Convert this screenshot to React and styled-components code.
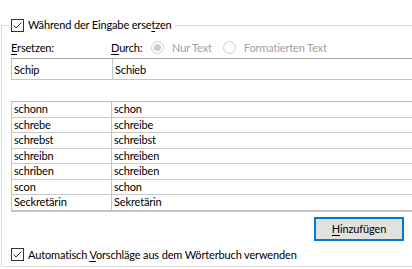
import React from 'react';
import styled, { createGlobalStyle } from 'styled-components';

const GlobalStyle = createGlobalStyle`
  html, body {
    margin: 0;
    padding: 0;
    background: #ffffff;
  }
  body {
    font-family: Lato, "Noto Sans", sans-serif;
    font-size: 11px;
    letter-spacing: -0.15px;
    color: #000000;
  }
`;

const Page = styled.div`
  width: 412px;
  height: 269px;
  overflow: hidden;
  background: #ffffff;
  padding-top: 18px;
  box-sizing: border-box;
`;

const GroupBox = styled.fieldset`
  margin: 0 0 0 1px;
  width: 440px;
  height: 249px;
  box-sizing: border-box;
  border: 1px solid #dcdcdc;
  padding: 0 0 0 7px;
`;

const Legend = styled.legend`
  padding: 0 3px 0 2px;
  display: flex;
  align-items: center;
  gap: 4px;
  line-height: 14px;
`;

const Inner = styled.div`
  margin-left: 2px;
  display: flex;
  flex-direction: column;
`;

const LabelRow = styled.div`
  display: flex;
  align-items: center;
  height: 16px;
  margin-top: 7px;
`;

const Label = styled.span`
  width: ${(p) => p.$width || 'auto'};
  flex: none;
`;

const Radio = styled.span`
  display: flex;
  align-items: center;
  gap: 8px;
  color: #a0a0a0;
  margin-left: ${(p) => p.$offset || '0px'};
`;

const Key = styled.u`
  text-decoration: underline;
  text-underline-offset: 2px;
`;

const InputRow = styled.div`
  display: grid;
  grid-template-columns: 100px 1fr;
  height: 22px;
  margin-top: 3px;
  border: 1px solid #c4c4c4;
  border-top-color: #a9a9a9;
  box-sizing: border-box;
`;

const Cell = styled.div`
  padding-left: 2px;
  display: flex;
  align-items: center;
  white-space: nowrap;
  border-left: ${(p) => (p.$first ? 'none' : '1px solid #c4c4c4')};
`;

const Table = styled.div`
  margin-top: 21px;
  border: 1px solid #c4c4c4;
  border-bottom-width: 2px;
  border-top-color: #b9b9b9;
`;

const Row = styled.div`
  display: grid;
  grid-template-columns: 99px 1fr;
  height: 14.5px;
  border-bottom: ${(p) => (p.$last ? 'none' : '1px solid #c9c9c9')};
  line-height: 14px;
`;

const ButtonRow = styled.div`
  display: flex;
  justify-content: flex-end;
  padding-right: 36px;
  margin-top: 5px;
`;

const Button = styled.button`
  width: 90px;
  height: 24px;
  background: #e1e1e1;
  border: 1px solid #0078d7;
  box-shadow: inset 0 0 0 1px #0078d7;
  font-family: inherit;
  font-size: 11px;
  letter-spacing: inherit;
  color: #000000;
  padding: 0;
`;

const CheckRow = styled.div`
  display: flex;
  align-items: center;
  gap: 4px;
  margin-top: 7px;
`;

const CheckBox = () => (
  <svg width="13" height="13" viewBox="0 0 13 13">
    <rect x="0.5" y="0.5" width="12" height="12" fill="#fff" stroke="#333" />
    <path d="M2.5 6.5 L5 9 L10.5 3.5" fill="none" stroke="#333" strokeWidth="1" />
  </svg>
);

const RadioDot = ({ checked }) => (
  <svg width="13" height="13" viewBox="0 0 13 13">
    <circle cx="6.5" cy="6.5" r="6" fill="#fff" stroke="#cccccc" />
    {checked && <circle cx="6.5" cy="6.5" r="3.5" fill="#cccccc" />}
  </svg>
);

const entries = [
  ['schonn', 'schon'],
  ['schrebe', 'schreibe'],
  ['schrebst', 'schreibst'],
  ['schreibn', 'schreiben'],
  ['schriben', 'schreiben'],
  ['scon', 'schon'],
  ['Seckretärin', 'Sekretärin'],
];

export default function App() {
  return (
    <Page>
      <GlobalStyle />
      <GroupBox>
        <Legend>
          <CheckBox />
          <span>Während der Eingabe erse<Key>t</Key>zen</span>
        </Legend>
        <Inner>
          <LabelRow>
            <Label $width="100px"><Key>E</Key>rsetzen:</Label>
            <Label $width="40px"><Key>D</Key>urch:</Label>
            <Radio><RadioDot checked />Nur Text</Radio>
            <Radio $offset="11px"><RadioDot />Formatierten Text</Radio>
          </LabelRow>
          <InputRow>
            <Cell $first>Schip</Cell>
            <Cell>Schieb</Cell>
          </InputRow>
          <Table>
            {entries.map(([from, to], i) => (
              <Row key={from} $last={i === entries.length - 1}>
                <Cell $first>{from}</Cell>
                <Cell>{to}</Cell>
              </Row>
            ))}
          </Table>
          <ButtonRow>
            <Button><Key>H</Key>inzufügen</Button>
          </ButtonRow>
          <CheckRow>
            <CheckBox />
            <span>Automatisch <Key>V</Key>orschläge aus dem Wörterbuch verwenden</span>
          </CheckRow>
        </Inner>
      </GroupBox>
    </Page>
  );
}
